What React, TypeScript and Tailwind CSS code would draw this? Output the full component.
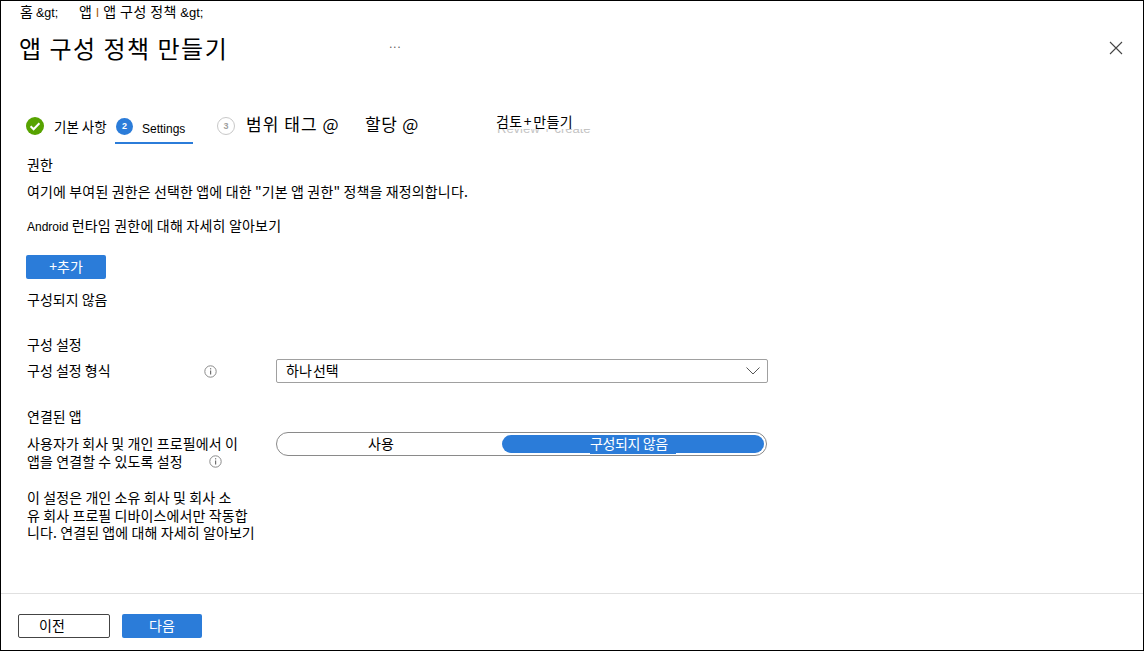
import React from "react";

function InfoIcon() {
  return (
    <svg width="13" height="13" viewBox="0 0 13 13" className="shrink-0">
      <circle cx="6.5" cy="6.5" r="5.7" fill="none" stroke="#8a8a8a" strokeWidth="1" />
      <rect x="6" y="5.5" width="1.2" height="4" fill="#707070" />
      <rect x="6" y="3.2" width="1.2" height="1.2" fill="#707070" />
    </svg>
  );
}

export default function App() {
  return (
    <div className="w-[1144px] h-[651px] border border-black bg-white text-black flex flex-col overflow-hidden font-['Noto_Sans_CJK_KR','Noto_Sans',sans-serif] text-[14px] leading-[18px]">
      {/* header */}
      <div className="flex items-center h-[22px] pl-[19px] text-[14px]">
        <span className="w-[59px] whitespace-nowrap">홈 <span className="text-[12.5px] font-['Liberation_Sans',sans-serif]">&amp;gt;</span></span>
        <span className="whitespace-nowrap tracking-[0.4px]">앱 <span className="text-[#a85a00] text-[12px]">I</span> 앱 구성 정책 <span className="text-[13px] tracking-normal font-['Liberation_Sans',sans-serif]">&amp;gt;</span></span>
      </div>
      <div className="flex items-center h-[34px] mt-[8px] pl-[18px] pr-[20px]">
        <span className="text-[24px] leading-[34px] tracking-[1.5px] w-[369px] whitespace-nowrap">앱 구성 정책 만들기</span>
        <span className="text-[10px] tracking-[-1.5px] text-[#555] mt-[-2px]">···</span>
        <svg width="14" height="14" viewBox="0 0 14 14" className="ml-auto">
          <path d="M1 1 L13 13 M13 1 L1 13" stroke="#444" strokeWidth="1.1" fill="none" />
        </svg>
      </div>

      {/* stepper */}
      <div className="flex items-start h-[45px] mt-[43px] pl-[25px]">
        <div className="flex items-center h-[34px] mt-[1px]">
          <svg width="18" height="18" viewBox="0 0 18 18">
            <circle cx="9" cy="9" r="9" fill="#57a300" />
            <path d="M4.6 9.2 L7.6 12.2 L13.4 6.2" stroke="#fff" strokeWidth="2" fill="none" />
          </svg>
          <span className="ml-[10px] w-[61px] text-[13.5px] whitespace-nowrap">기본 사항</span>
        </div>
        <div className="relative flex items-center h-[34px] w-[78px] mt-[1px]">
          <span className="flex items-center justify-center w-[17px] h-[17px] ml-[1px] rounded-full bg-[#2b7cd9] text-white text-[9px] font-bold font-['Liberation_Sans',sans-serif]">2</span>
          <span className="ml-[9px] mt-[5px] text-[12px] font-['Liberation_Sans',sans-serif]">Settings</span>
          <div className="absolute left-0 right-0 bottom-[-1px] h-[2px] bg-[#2b7cd9]" />
        </div>
        <div className="relative flex items-center h-[34px] ml-[24px] mt-[1px]">
          <span className="flex items-center justify-center w-[18px] h-[18px] rounded-full border border-[#c8c8c8] text-[#a0a0a0] text-[9px] font-bold font-['Liberation_Sans',sans-serif]">3</span>
          <span className="ml-[11px] mt-[-4px] text-[17px] tracking-[1.05px] w-[119px] whitespace-nowrap">범위 태그 @</span>
          <span className="mt-[-4px] text-[17px] tracking-[0.7px] w-[131px] whitespace-nowrap">할당 @</span>
          <span className="mt-[-10px] text-[14px] tracking-[0.3px] whitespace-nowrap [word-spacing:-2px]">검토 + 만들기</span>
          <div className="absolute left-[280px] top-[20px] h-[5px] w-[96px] overflow-hidden text-[13px] leading-[12px] text-[#c4c4c4] font-['Liberation_Sans',sans-serif] whitespace-nowrap">
            <div className="mt-[-6px]">Review + create</div>
          </div>
        </div>
      </div>

      {/* body */}
      <div className="flex flex-col pl-[26px] flex-1">
        <div className="mt-[2px] h-[18px]">권한</div>
        <div className="mt-[9px] h-[18px] whitespace-nowrap tracking-[0.14px]">여기에 부여된 권한은 선택한 앱에 대한 "기본 앱 권한" 정책을 재정의합니다.</div>
        <div className="mt-[16px] h-[18px] whitespace-nowrap tracking-[0.2px]"><span className="text-[12px] tracking-normal font-['Liberation_Sans',sans-serif]">Android</span> 런타임 권한에 대해 자세히 알아보기</div>
        <button className="mt-[21px] ml-[-1px] w-[80px] h-[24px] rounded-[2px] bg-[#2b7cd9] text-white text-[14px] pb-[3px]">+추가</button>
        <div className="mt-[11px] h-[18px]">구성되지 않음</div>

        <div className="mt-[27px] h-[18px]">구성 설정</div>
        <div className="flex items-center mt-[6px] h-[24px]">
          <span className="w-[177px] pb-[2px]">구성 설정 형식</span>
          <InfoIcon />
          <div className="ml-[59px] w-[492px] h-[24px] flex items-center justify-between border border-[#a0a0a0] rounded-[2px] pl-[9px] pr-[7px]">
            <span className="[word-spacing:-2px] pb-[2px]">하나 선택</span>
            <svg width="14" height="8" viewBox="0 0 14 8"><path d="M0.5 0.5 L7 7 L13.5 0.5" stroke="#555" strokeWidth="1" fill="none" /></svg>
          </div>
        </div>

        <div className="mt-[24px] h-[18px]">연결된 앱</div>
        <div className="flex mt-[7px] h-[37px]">
          <div className="w-[249px] pt-[3px] leading-[17.5px] whitespace-nowrap tracking-[0.1px]">
            <div>사용자가 회사 및 개인 프로필에서 이</div>
            <div className="flex items-center">
              <span>앱을 연결할 수 있도록 설정</span>
              <span className="ml-[26px]"><InfoIcon /></span>
            </div>
          </div>
          <div className="w-[491px] h-[24px] flex items-center rounded-full border border-[#8a8a8a] p-[2px]">
            <div className="w-[204px] text-center pb-[3px]">사용</div>
            <div className="ml-[19px] flex-1 h-[18px] rounded-full bg-[#2b7cd9] text-white pl-[88px]">
              <span className="block w-[86px] h-[19px] bg-[#2b7cd9] leading-[17px] tracking-[-0.4px] whitespace-nowrap">구성되지 않음</span>
            </div>
          </div>
        </div>

        <div className="mt-[20px] leading-[17.5px] whitespace-nowrap tracking-[0.1px]">
          <div>이 설정은 개인 소유 회사 및 회사 소</div>
          <div>유 회사 프로필 디바이스에서만 작동합</div>
          <div>니다. 연결된 앱에 대해 자세히 알아보기</div>
        </div>
      </div>

      {/* footer */}
      <div className="flex items-start h-[57px] border-t border-[#e0e0e0] pl-[17px] pt-[20px]">
        <button className="w-[92px] h-[24px] border border-[#444] rounded-[2px] pr-[24px] pb-[3px]">이전</button>
        <button className="ml-[12px] w-[80px] h-[24px] rounded-[2px] bg-[#2b7cd9] text-white pb-[3px]">다음</button>
      </div>
    </div>
  );
}
